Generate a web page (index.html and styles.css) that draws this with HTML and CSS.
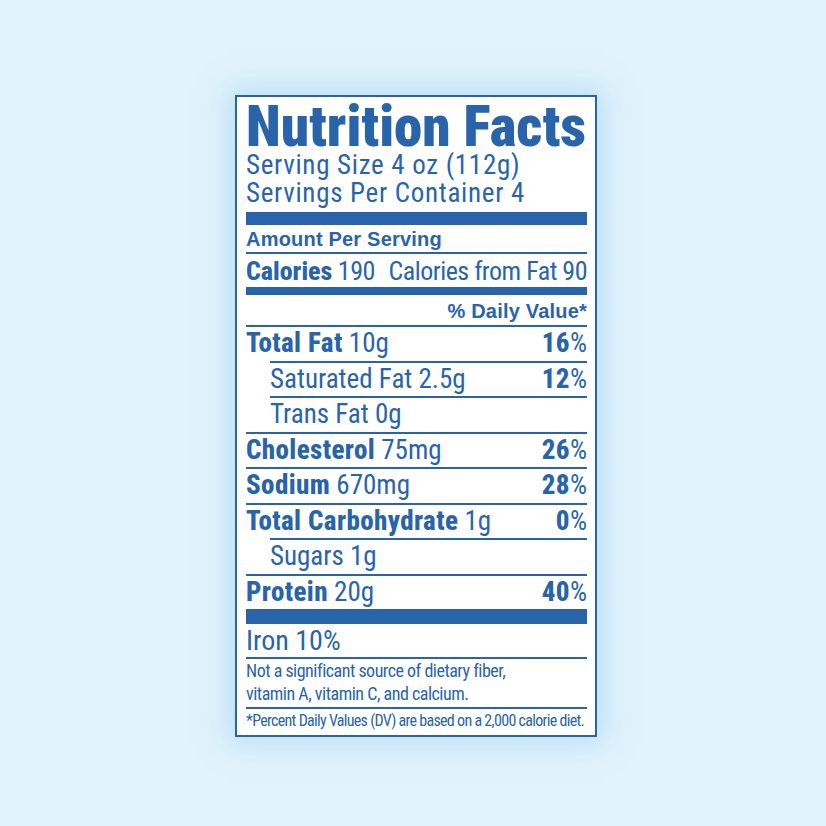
FILE: index.html
```html
<!DOCTYPE html>
<html lang="en">

<head>
	<meta charset="UTF-8">
	<meta name="viewport" content="width=device-width, initial-scale=1.0">
	<title>Nutrition Facts</title>

	<link rel="stylesheet" href="styles.css">

</head>

<body>

	<div class="label">

		<h1 class="title">Nutrition Facts</h1>
		<div class="serving">
			<p>Serving Size 4 oz (112g)</p>
			<p>Servings Per Container 4</p>
		</div>

		<div class="bar bar_big"></div>

		<div class="amount">Amount Per Serving</div>
		<div class="calories">
			<span><b>Calories</b> 190</span>
			<span>Calories from Fat 90</span>
		</div>

		<div class="bar bar_mid"></div>

		<div class="dv_head">% Daily Value*</div>

		<ul class="facts">
			<li><span><b>Total Fat</b> 10g</span><span class="pct"><b>16</b>%</span></li>
			<li class="sub"><span>Saturated Fat 2.5g</span><span class="pct"><b>12</b>%</span></li>
			<li class="sub"><span>Trans Fat 0g</span></li>
			<li><span><b>Cholesterol</b> 75mg</span><span class="pct"><b>26</b>%</span></li>
			<li><span><b>Sodium</b> 670mg</span><span class="pct"><b>28</b>%</span></li>
			<li><span><b>Total Carbohydrate</b> 1g</span><span class="pct"><b>0</b>%</span></li>
			<li class="sub"><span>Sugars 1g</span></li>
			<li><span><b>Protein</b> 20g</span><span class="pct"><b>40</b>%</span></li>
		</ul>

		<div class="bar bar_big2"></div>

		<div class="iron">Iron 10%</div>
		<p class="note">Not a significant source of dietary fiber,<br>vitamin A, vitamin C, and calcium.</p>
		<p class="foot">*Percent Daily Values (DV) are based on a 2,000 calorie diet.</p>

	</div>

</body>

</html>
```

FILE: styles.css
```css
* {
	box-sizing: border-box;
}

html,
body {
	margin: 0;
	height: 100%;
}

body {
	background: #e1f3fc;
	display: flex;
	justify-content: center;
	align-items: flex-start;
	padding: 95px 0 0 6px;
	color: #2964ab;
	font-family: "Roboto Condensed", "DejaVu Sans Condensed", sans-serif;
}

p,
h1,
ul {
	margin: 0;
	padding: 0;
}

ul>li {
	list-style-type: none;
}

b {
	font-weight: 800;
	letter-spacing: 0.4px;
}

.label {
	width: 362px;
	background: #fff;
	border: 2px solid #2964ab;
	padding: 6px 8px 4px 9px;
	box-shadow: 0 0 28px 6px rgba(150, 205, 240, 0.55);
}

.title {
	font-size: 57px;
	line-height: 48px;
	font-weight: 900;
	white-space: nowrap;
}

.serving {
	font-size: 27px;
	line-height: 28px;
	letter-spacing: 0.7px;
	white-space: nowrap;
}

.bar {
	background: #2964ab;
}

.bar_big {
	height: 13px;
	margin-top: 5px;
}

.bar_mid {
	height: 8px;
	margin-top: 2px;
}

.bar_big2 {
	height: 15px;
}

.amount,
.dv_head {
	font-family: "Liberation Sans", sans-serif;
	font-weight: 700;
	font-size: 20px;
	line-height: 22px;
	letter-spacing: 0.2px;
}

.amount {
	padding: 3px 0 2px;
	border-bottom: 2px solid #2964ab;
}

.calories {
	display: flex;
	justify-content: space-between;
	font-size: 26px;
	line-height: 28px;
	letter-spacing: -0.5px;
	white-space: nowrap;
	padding-top: 3px;
}

.calories b {
	letter-spacing: 0;
}

.dv_head {
	text-align: right;
	padding: 5px 0 3px;
}

.facts li {
	display: flex;
	justify-content: space-between;
	border-top: 2px solid #2964ab;
	font-size: 27px;
	line-height: 33.5px;
	white-space: nowrap;
}

.facts li.sub {
	margin-left: 24px;
}

.iron {
	font-size: 28px;
	line-height: 32px;
	padding-top: 1px;
	border-bottom: 2px solid #2964ab;
}

.note {
	font-size: 18px;
	line-height: 23px;
	letter-spacing: -0.5px;
	padding-bottom: 2px;
	border-bottom: 2px solid #2964ab;
}

.foot {
	font-size: 16px;
	line-height: 20px;
	letter-spacing: -0.7px;
	padding-top: 2px;
	white-space: nowrap;
}
```
